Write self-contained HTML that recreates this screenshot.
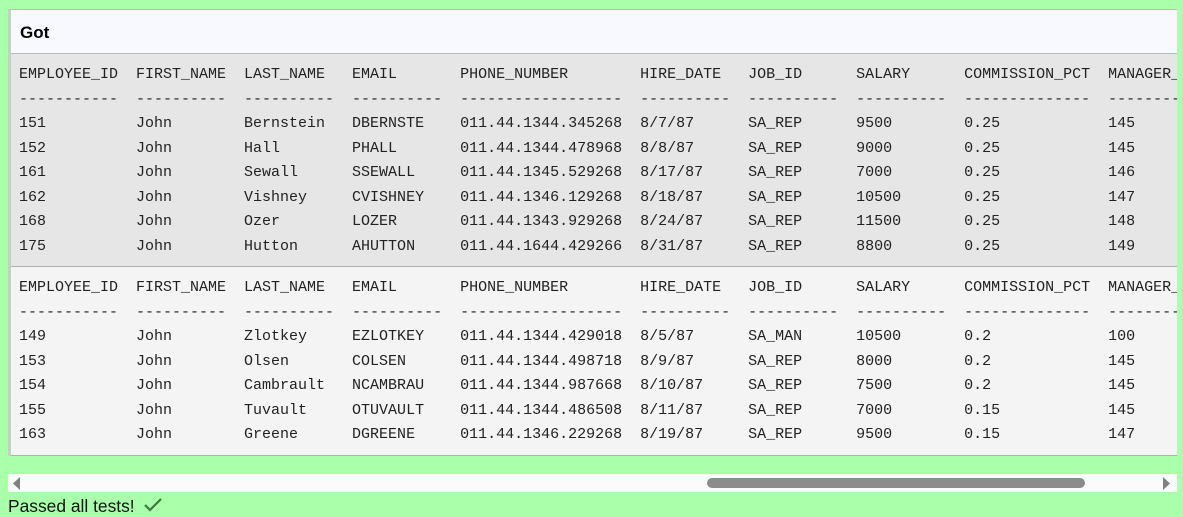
<!DOCTYPE html>
<html><head><style>
*{margin:0;padding:0;box-sizing:border-box}
html,body{width:1183px;height:514px;overflow:hidden;background:#aaffaa;font-family:"Liberation Sans",sans-serif}
#panel{position:absolute;left:8px;top:9px;width:1169px;height:447px;overflow:hidden;border-left:3px solid #c8cdc8;border-top:1px solid #bbb}
#hdr{height:44px;background:#f8f9fe;border-bottom:1px solid #bbb;font-weight:bold;font-size:17px;padding:13px 0 0 9px;color:#000}
.sec{position:relative;border-bottom:1px solid #b0b0b0}
pre{position:absolute;left:8px;font-family:"Liberation Mono",monospace;font-size:15px;line-height:24.5px;color:#222;white-space:pre}
#s1{background:#e6e6e6;height:213px}
#s2{background:#f4f4f4;height:189px}
#sb{position:absolute;left:8px;top:474px;width:1169px;height:18px;background:#fbfbfb}
#thumb{position:absolute;left:699px;top:4px;width:378px;height:10px;border-radius:5px;background:#8c8c8c}
#msg{position:absolute;left:8px;top:496px;font-size:17.4px;color:#111}
</style></head><body>
<div id="panel">
<div id="hdr">Got</div>
<div class="sec" id="s1"><pre style="top:9px">EMPLOYEE_ID  FIRST_NAME  LAST_NAME   EMAIL       PHONE_NUMBER        HIRE_DATE   JOB_ID      SALARY      COMMISSION_PCT  MANAGER_ID
-----------  ----------  ----------  ----------  ------------------  ----------  ----------  ----------  --------------  ----------
151          John        Bernstein   DBERNSTE    011.44.1344.345268  8/7/87      SA_REP      9500        0.25            145
152          John        Hall        PHALL       011.44.1344.478968  8/8/87      SA_REP      9000        0.25            145
161          John        Sewall      SSEWALL     011.44.1345.529268  8/17/87     SA_REP      7000        0.25            146
162          John        Vishney     CVISHNEY    011.44.1346.129268  8/18/87     SA_REP      10500       0.25            147
168          John        Ozer        LOZER       011.44.1343.929268  8/24/87     SA_REP      11500       0.25            148
175          John        Hutton      AHUTTON     011.44.1644.429266  8/31/87     SA_REP      8800        0.25            149</pre></div>
<div class="sec" id="s2"><pre style="top:9px">EMPLOYEE_ID  FIRST_NAME  LAST_NAME   EMAIL       PHONE_NUMBER        HIRE_DATE   JOB_ID      SALARY      COMMISSION_PCT  MANAGER_ID
-----------  ----------  ----------  ----------  ------------------  ----------  ----------  ----------  --------------  ----------
149          John        Zlotkey     EZLOTKEY    011.44.1344.429018  8/5/87      SA_MAN      10500       0.2             100
153          John        Olsen       COLSEN      011.44.1344.498718  8/9/87      SA_REP      8000        0.2             145
154          John        Cambrault   NCAMBRAU    011.44.1344.987668  8/10/87     SA_REP      7500        0.2             145
155          John        Tuvault     OTUVAULT    011.44.1344.486508  8/11/87     SA_REP      7000        0.15            145
163          John        Greene      DGREENE     011.44.1346.229268  8/19/87     SA_REP      9500        0.15            147</pre></div>
</div>
<div id="sb">
<svg style="position:absolute;left:4px;top:3px" width="9" height="13"><polygon points="8,0 8,13 1,6.5" fill="#808080"/></svg>
<div id="thumb"></div>
<svg style="position:absolute;left:1154px;top:3px" width="9" height="13"><polygon points="1,0 1,13 8,6.5" fill="#808080"/></svg>
</div>
<div id="msg">Passed all tests! <svg width="20" height="14" style="margin-left:4px;vertical-align:0"><path d="M2 7 L7 12 L18 1" stroke="#3d7a3d" stroke-width="2.2" fill="none"/></svg></div>
</body></html>
